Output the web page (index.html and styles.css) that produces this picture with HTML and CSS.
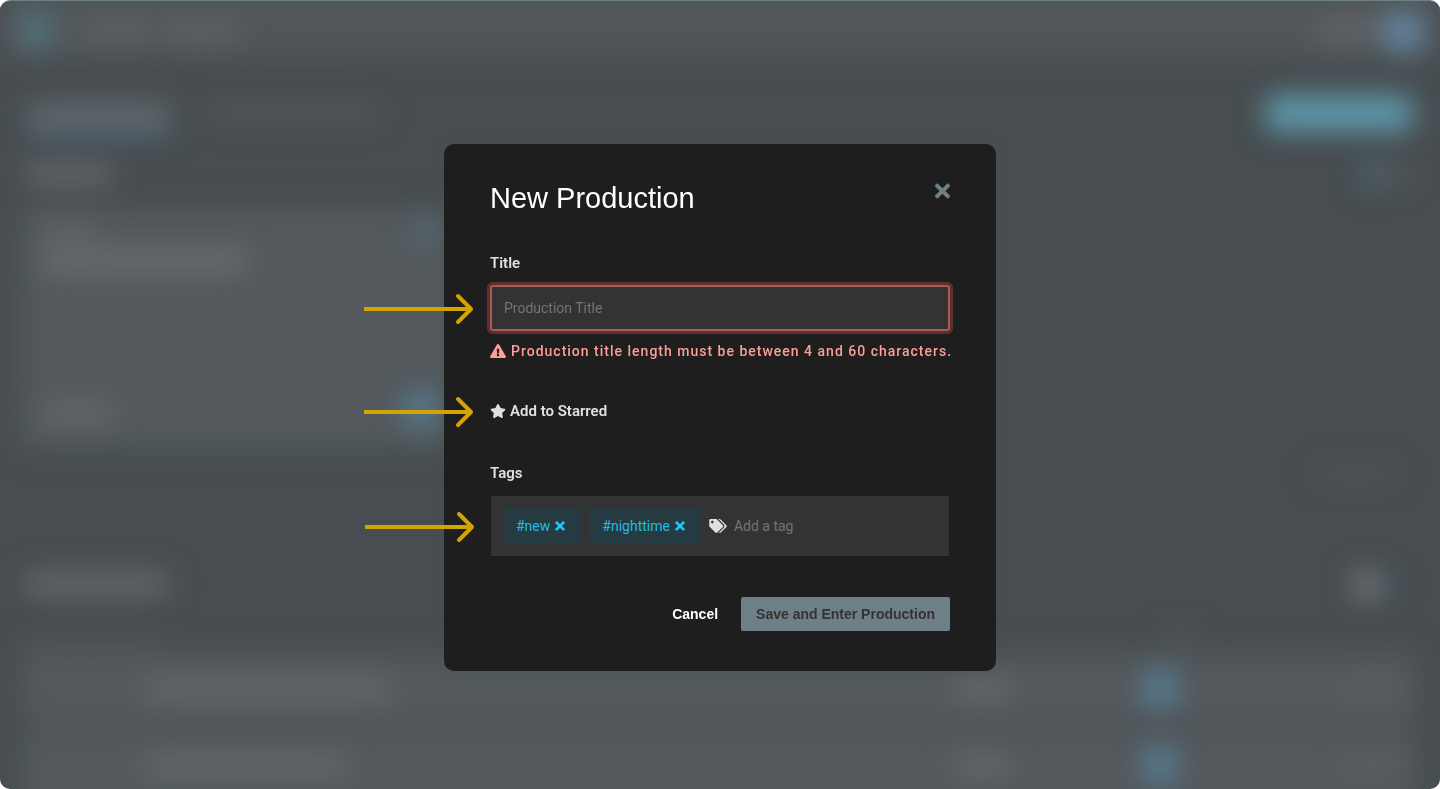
FILE: index.html
```html
<!DOCTYPE html>
<html lang="en">
<head>
<meta charset="utf-8">
<title>New Production</title>
<link rel="stylesheet" href="styles.css">
</head>
<body>
<svg width="0" height="0" class="sprite" aria-hidden="true">
  <symbol id="times" viewBox="0 0 352 512"><path d="M242.72 256l100.07-100.07c12.28-12.28 12.28-32.19 0-44.48l-22.24-22.24c-12.28-12.28-32.19-12.28-44.48 0L176 189.28 75.93 89.21c-12.28-12.28-32.19-12.28-44.48 0L9.21 111.45c-12.28 12.28-12.28 32.19 0 44.48L109.28 256 9.21 356.07c-12.28 12.28-12.28 32.19 0 44.48l22.24 22.24c12.28 12.28 32.2 12.28 44.48 0L176 322.72l100.07 100.07c12.28 12.28 32.2 12.28 44.48 0l22.24-22.24c12.28-12.28 12.28-32.19 0-44.48L242.72 256z"/></symbol>
  <symbol id="arrow" viewBox="0 0 110 32"><path d="M0 16H106" stroke="#d4a500" stroke-width="4" fill="none"/><path d="M94 3l13 13-13 13" stroke="#d4a500" stroke-width="4" stroke-linecap="round" stroke-linejoin="round" fill="none"/></symbol>
</svg>
<div class="page">
  <svg class="backdrop" viewBox="0 0 1440 789" preserveAspectRatio="none" aria-hidden="true">
    <defs>
      <filter id="soft" filterUnits="userSpaceOnUse" x="-60" y="-60" width="1560" height="909" color-interpolation-filters="sRGB"><feGaussianBlur stdDeviation="14"/></filter>
    </defs>
    <rect width="1440" height="789" fill="#474d50"/>
    <g filter="url(#soft)">
      <rect x="0" y="-50" width="1440" height="108" fill="#515659"/>
      <rect x="20" y="207" width="600" height="242" fill="#53595c"/>
      <rect x="22" y="652" width="1396" height="72" fill="#53595c"/>
      <rect x="22" y="730" width="1396" height="110" fill="#53595c"/>
      <rect x="20" y="640" width="150" height="14" fill="#4f5558"/>
    </g>
    <g filter="url(#soft)">
      <circle cx="36" cy="29" r="18" fill="#4f7c84" opacity=".9"/>
      <rect x="84" y="19" width="65" height="20" fill="#64686c" opacity=".75"/>
      <rect x="165" y="19" width="75" height="20" fill="#64686c" opacity=".75"/>
      <rect x="1316" y="19" width="70" height="20" fill="#717376" opacity=".6"/>
      <circle cx="1404" cy="31" r="20" fill="#648ba8"/>
      <rect x="28" y="103" width="142" height="22" fill="#6a7074" opacity=".85"/>
      <rect x="28" y="126" width="144" height="10" fill="#4d6d83" opacity=".8"/>
      <rect x="210" y="102" width="170" height="18" fill="#5a5f63" opacity=".6"/>
      <rect x="1266" y="95" width="146" height="35" fill="#60a0b3" opacity=".95"/>
      <rect x="26" y="163" width="86" height="22" fill="#6d7174" opacity=".75"/>
      <circle cx="1372" cy="174" r="14" fill="#52717d" opacity=".7"/>
      <rect x="1388" y="166" width="20" height="16" fill="#6b6e71" opacity=".6"/>
      <rect x="42" y="222" width="54" height="14" fill="#6f7073" opacity=".65"/>
      <rect x="42" y="249" width="205" height="22" fill="#717578" opacity=".8"/>
      <circle cx="426" cy="231" r="15" fill="#55707f" opacity=".7"/>
      <rect x="44" y="402" width="68" height="22" fill="#6c7073" opacity=".7"/>
      <circle cx="421" cy="409" r="20" fill="#587f97" opacity=".9"/>
      <rect x="26" y="573" width="142" height="22" fill="#6c7073" opacity=".85"/>
      <circle cx="1367" cy="585" r="15" fill="#75797a"/>
      <circle cx="1388" cy="586" r="10" fill="#4c6177" opacity=".5"/>
      <rect x="1316" y="466" width="80" height="14" fill="#5a5f62" opacity=".5"/>
      <rect x="1160" y="632" width="40" height="10" fill="#676c6f" opacity=".5"/>
      <rect x="74" y="684" width="16" height="10" fill="#765b5c" opacity=".5"/>
      <rect x="74" y="760" width="16" height="10" fill="#765b5c" opacity=".5"/>
      <rect x="144" y="680" width="248" height="19" fill="#6c7073" opacity=".8"/>
      <rect x="144" y="756" width="204" height="19" fill="#6c7073" opacity=".8"/>
      <rect x="954" y="680" width="56" height="18" fill="#727578" opacity=".7"/>
      <rect x="954" y="756" width="56" height="18" fill="#727578" opacity=".7"/>
      <circle cx="1160" cy="689" r="20" fill="#567f97" opacity=".95"/>
      <circle cx="1160" cy="765" r="20" fill="#567f97" opacity=".95"/>
      <rect x="1341" y="680" width="58" height="16" fill="#65696c" opacity=".55"/>
      <rect x="1341" y="756" width="58" height="16" fill="#65696c" opacity=".55"/>
    </g>
  </svg>

  <form class="modal" role="dialog" aria-labelledby="heading">
    <header class="modal-head">
      <h1 id="heading">New Production</h1>
      <button type="button" class="close" aria-label="Close"><svg width="15" height="22"><use href="#times"/></svg></button>
    </header>

    <label class="label" for="title">Title</label>
    <div class="row title-row">
      <svg class="pointer" width="110" height="32" aria-hidden="true"><use href="#arrow"/></svg>
      <input class="title-input" id="title" type="text" placeholder="Production Title">
    </div>
    <p class="error">
      <svg width="16" height="14" viewBox="0 0 576 512" aria-hidden="true"><path d="M569.517 440.013C587.975 472.007 564.806 512 527.94 512H48.054c-36.937 0-59.999-40.055-41.577-71.987L246.423 23.985c18.467-32.009 64.72-31.951 83.154 0l239.94 416.028zM288 354c-25.405 0-46 20.595-46 46s20.595 46 46 46 46-20.595 46-46-20.595-46-46-46zm-43.673-165.346l7.418 136c.347 6.364 5.609 11.346 11.982 11.346h48.546c6.373 0 11.635-4.982 11.982-11.346l7.418-136c.375-6.874-5.098-12.654-11.982-12.654h-63.383c-6.884 0-12.356 5.78-11.981 12.654z"/></svg>
      <span>Production title length must be between 4 and 60 characters.</span>
    </p>

    <div class="row star-row">
      <svg class="pointer" width="110" height="32" aria-hidden="true"><use href="#arrow"/></svg>
      <button type="button" class="star"><svg width="16" height="14" viewBox="0 0 576 512" aria-hidden="true"><path d="M259.3 17.8L194 150.2 47.9 171.5c-26.2 3.8-36.7 36.1-17.7 54.6l105.7 103-25 145.5c-4.5 26.3 23.2 46 46.4 33.7L288 439.6l130.7 68.7c23.2 12.2 50.9-7.4 46.4-33.7l-25-145.5 105.7-103c19-18.5 8.5-50.8-17.7-54.6L382 150.2 316.7 17.8c-11.7-23.6-45.6-23.9-57.4 0z"/></svg>Add to Starred</button>
    </div>

    <label class="label" for="tag">Tags</label>
    <div class="row tags">
      <svg class="pointer" width="110" height="32" aria-hidden="true"><use href="#arrow"/></svg>
      <span class="chip">#new<button type="button" aria-label="Remove #new"><svg width="10" height="14"><use href="#times"/></svg></button></span>
      <span class="chip">#nighttime<button type="button" aria-label="Remove #nighttime"><svg width="10" height="14"><use href="#times"/></svg></button></span>
      <svg class="tag-icon" width="18" height="14" viewBox="0 0 640 512" aria-hidden="true"><path d="M497.941 225.941L286.059 14.059A48 48 0 0 0 252.118 0H48C21.49 0 0 21.49 0 48v204.118a48 48 0 0 0 14.059 33.941l211.882 211.882c18.744 18.745 49.136 18.746 67.882 0l204.118-204.118c18.745-18.745 18.745-49.137 0-67.882zM112 160c-26.51 0-48-21.49-48-48s21.49-48 48-48 48 21.49 48 48-21.49 48-48 48zm513.941 133.823L421.823 497.941c-18.745 18.745-49.137 18.745-67.882 0l-.36-.36L527.64 323.522c16.999-16.999 26.362-39.6 26.362-63.64s-9.362-46.641-26.362-63.64L331.397 0h48.721a48 48 0 0 1 33.941 14.059l211.882 211.882c18.745 18.745 18.745 49.137 0 67.882z"/></svg>
      <input class="tag-input" id="tag" type="text" placeholder="Add a tag">
    </div>

    <footer class="actions">
      <button type="button" class="cancel">Cancel</button>
      <button type="submit" class="save">Save and Enter Production</button>
    </footer>
  </form>
</div>
</body>
</html>
```

FILE: styles.css
```css
* { box-sizing: border-box; }
body { margin: 0; background: #fff; font-family: Roboto, sans-serif; font-size: 14px; line-height: 20px; color: #e0e0e0; }
button, input { font: inherit; color: inherit; border: 0; background: none; padding: 0; margin: 0; outline: 0; }
button { cursor: pointer; }
svg { display: block; fill: currentColor; flex: none; }
.sprite { position: absolute; }

.page { position: relative; min-height: 100vh; display: grid; place-items: center; padding: 24px 16px 0; border-radius: 10px; overflow: hidden; border-top: 1px solid #6d8086; }
.backdrop { position: absolute; inset: 0; width: 100%; height: 100%; }

.modal { position: relative; width: 100%; max-width: 552px; padding: 36px 46px 40px; background: #1e1e1e; border-radius: 10px; box-shadow: 0 0 8px #40545566; }
.modal-head { display: flex; justify-content: space-between; align-items: flex-start; margin-bottom: 37px; }
h1 { margin: 0; font: 400 29px/36px "Liberation Sans", sans-serif; color: #fff; }
.close { color: #6f7f89; }

.label { display: block; font-size: 15px; font-weight: 600; margin-bottom: 12px; }
.row { position: relative; }
.pointer { position: absolute; left: -126px; top: 50%; margin-top: -15px; }
.title-input { display: block; width: 100%; height: 46px; padding: 0 12px; background: #333; border: 2px solid #ae5852; border-radius: 3px; box-shadow: 0 0 0 3px #5a3232; }
input::placeholder { color: #747474; opacity: 1; }
.error { display: flex; align-items: center; gap: 5px; margin: 10px 0 40px; color: #ff9e99; font-weight: 500; letter-spacing: 1px; white-space: nowrap; }
.star-row { margin-bottom: 42px; }
.star { display: flex; align-items: center; gap: 4px; font-size: 15px; font-weight: 600; }

.tags { display: flex; align-items: center; gap: 7px; height: 62px; padding: 0 12px; background: #333; border: 1px solid #161c1f; }
.chip { display: flex; align-items: center; gap: 5px; height: 36px; padding: 0 17px 0 13px; background: #263a41; border-radius: 3px; color: #27b9e2; }
.chip button { color: #1dcdf8; }
.tag-icon { color: #e0e0e0; }
.tag-input { flex: 1; min-width: 0; }

.actions { display: flex; justify-content: flex-end; align-items: center; gap: 23px; margin-top: 40px; font: 700 14px/20px "Liberation Sans", sans-serif; }
.cancel { color: #fff; }
.save { height: 34px; padding: 0 15px; background: #6f7f88; color: #333; border-radius: 2px; }
```
